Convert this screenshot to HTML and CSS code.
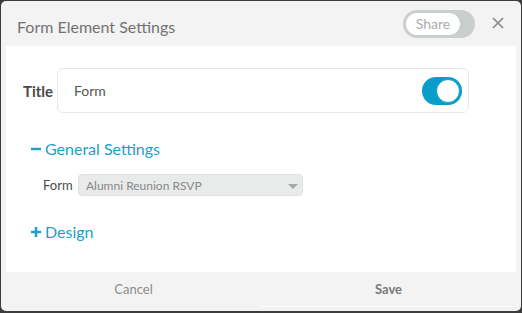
FILE: index.html
```html
<!DOCTYPE html>
<html lang="en">
<head>
    <meta charset="UTF-8">
    <title>Form Element Settings</title>
    <link rel="stylesheet" href="styles.css">
</head>
<body>

<div class="modal">
    <div class="modal-header">
        <h1>Form Element Settings</h1>
        <div class="share-toggle"><span>Share</span></div>
        <span class="close">
            <svg width="12" height="12" viewBox="0 0 12 12"><path d="M1 1L11 11M11 1L1 11" stroke="#8a8a8a" stroke-width="1.7" fill="none"/></svg>
        </span>
    </div>

    <div class="panel">
        <div class="title-row">
            <label>Title</label>
            <div class="title-box">
                <span>Form</span>
                <div class="switch"><div class="knob"></div></div>
            </div>
        </div>

        <div class="section">
            <div class="section-head">
                <svg class="sign" width="14" height="12" viewBox="0 0 14 12"><path d="M0 6H10" stroke="#1b9fcd" stroke-width="2.4"/></svg>
                General Settings
            </div>
            <div class="field">
                <label>Form</label>
                <div class="select">
                    <span>Alumni Reunion RSVP</span>
                    <span class="caret"></span>
                </div>
            </div>
        </div>

        <div class="section">
            <div class="section-head">
                <svg class="sign" width="14" height="12" viewBox="0 0 14 12"><path d="M0 6H10M5 1V11" stroke="#1b9fcd" stroke-width="2.4"/></svg>
                Design
            </div>
        </div>
    </div>

    <div class="modal-footer">
        <button class="cancel">Cancel</button>
        <button class="save">Save</button>
    </div>
</div>

</body>
</html>
```

FILE: styles.css
```css
body {
    margin: 0;
    background: #3c3c3c;
    font-family: Lato, "Open Sans", sans-serif;
}
.modal {
    margin: 1px 1px 0 1px;
    height: 310px;
    background: #f2f3f2;
    border-radius: 5px;
    display: flex;
    flex-direction: column;
}
.modal-header {
    height: 45px;
    display: flex;
    align-items: center;
    padding: 0 0 0 16px;
}
.modal-header h1 {
    margin: 0;
    flex: 1;
    font-size: 16px;
    font-weight: normal;
    color: #727272;
    padding-top: 6px;
}
.share-toggle {
    width: 72px;
    height: 28px;
    box-sizing: border-box;
    background: #c9cfcc;
    border-radius: 14px;
    padding: 3px;
    margin-top: 1px;
}
.share-toggle span {
    display: block;
    width: 54px;
    height: 22px;
    line-height: 22px;
    background: #fff;
    border-radius: 11px;
    text-align: center;
    font-size: 14px;
    color: #a9adab;
}
.close {
    width: 46px;
    display: flex;
    justify-content: center;
    margin-top: -2px;
}
.panel {
    margin: 0 5px;
    height: 226px;
    background: #fff;
    padding: 22px 0 0 17px;
    box-sizing: border-box;
}
.title-row {
    display: flex;
    align-items: center;
}
.title-row label {
    width: 34px;
    font-size: 15px;
    font-weight: bold;
    color: #4a4a4a;
}
.title-box {
    width: 412px;
    height: 45px;
    box-sizing: border-box;
    border: 1px solid #e8e8e8;
    border-radius: 6px;
    display: flex;
    align-items: center;
    justify-content: space-between;
    padding: 0 6px 0 16px;
    font-size: 14px;
    color: #555;
}
.switch {
    width: 40px;
    height: 28px;
    box-sizing: border-box;
    background: #0a9dc9;
    border-radius: 14px;
    padding: 2px;
    display: flex;
    justify-content: flex-end;
}
.knob {
    width: 24px;
    height: 24px;
    box-sizing: border-box;
    border-radius: 50%;
    background: #fff;
    border: 1px solid #0a9dc9;
}
.section {
    padding-left: 8px;
}
.section-head {
    margin-top: 23px;
    font-size: 16px;
    color: #1b9fcd;
    height: 24px;
    display: flex;
    align-items: center;
}
.sign {
    margin-top: 1px;
}
.field {
    display: flex;
    align-items: center;
    margin-top: 14px;
    padding-left: 12px;
}
.field label {
    width: 35px;
    font-size: 13px;
    color: #4a4a4a;
}
.select {
    width: 225px;
    height: 22px;
    box-sizing: border-box;
    background: #e9ebeb;
    border: 1px solid #e0e2e2;
    border-radius: 4px;
    display: flex;
    align-items: center;
    justify-content: space-between;
    padding: 0 4px 0 7px;
    font-size: 12px;
    color: #888;
}
.caret {
    width: 0;
    height: 0;
    border-left: 5px solid transparent;
    border-right: 5px solid transparent;
    border-top: 5px solid #a5a8a8;
    margin-top: 2px;
}
.modal-footer {
    flex: 1;
    display: flex;
    margin: 0 5px 4px 5px;
}
.modal-footer button {
    flex: 1;
    background: none;
    border: none;
    font-family: inherit;
    font-size: 13px;
    color: #8c8c8c;
    padding-bottom: 2px;
}
.modal-footer .save {
    font-weight: bold;
    color: #7a7a7a;
    border-bottom: 1px solid #fff;
}
```
